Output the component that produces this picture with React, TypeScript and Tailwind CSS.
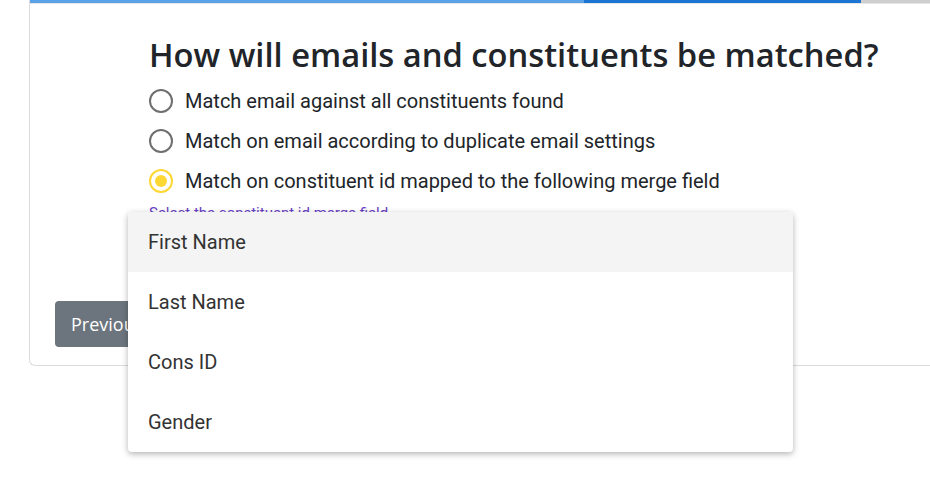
import React from "react";

const options = [
  "Match email against all constituents found",
  "Match on email according to duplicate email settings",
  "Match on constituent id mapped to the following merge field",
];

const fields = ["First Name", "Last Name", "Cons ID", "Gender"];

function Radio({ checked }: { checked: boolean }) {
  return (
    <span
      className={
        checked
          ? "flex h-6 w-6 shrink-0 items-center justify-center rounded-full border-2 border-[#fdd835]"
          : "flex h-6 w-6 shrink-0 items-center justify-center rounded-full border-2 border-[#6f6f6f]"
      }
    >
      {checked && <span className="h-3 w-3 rounded-full bg-[#fdd835]" />}
    </span>
  );
}

export default function App() {
  return (
    <div className="relative h-[492px] w-full overflow-hidden bg-white">
      {/* card */}
      <div className="ml-[29px] h-[366px] rounded-bl-md border-b border-l border-[#dcdcdc]">
        <div className="flex h-[3px]">
          <div className="w-[554px] bg-[#5aa2e8]" />
          <div className="w-[277px] bg-[#1c74d3]" />
          <div className="flex-1 bg-[#cfcfcf]" />
        </div>
        <div className="h-px bg-[#e6e6e6]" />

        <div className="pl-[119px] pt-[31px]">
          <h2 className="text-[32.7px] font-semibold leading-[39px] text-[#212529] [font-family:'Open_Sans',sans-serif]">
            How will emails and constituents be matched?
          </h2>
          <div className="mt-[7px] flex flex-col">
            {options.map((o, i) => (
              <label
                key={o}
                className="flex h-10 items-center gap-3 text-[20px] text-[#212529] [font-family:Roboto,sans-serif]"
              >
                <Radio checked={i === 2} />
                <span>{o}</span>
              </label>
            ))}
          </div>
          <p className="mt-[2px] text-[15px] leading-5 text-[#6a3fc4] [font-family:Roboto,sans-serif]">
            Select the constituent id merge field
          </p>
        </div>

        <div className="mt-[78px] pl-[25px]">
          <button className="h-[46px] rounded-[4px] bg-[#6c757d] px-4 text-[18px] text-white [font-family:'Open_Sans',sans-serif]">
            Previous
          </button>
        </div>
      </div>

      {/* dropdown menu */}
      <ul className="absolute left-[128px] top-[212px] w-[665px] overflow-hidden rounded-[4px] bg-white shadow-[0_2px_6px_rgba(0,0,0,0.3)]">
        {fields.map((f, i) => (
          <li
            key={f}
            className={
              i === 0
                ? "flex h-[60px] items-center bg-[#f4f4f4] pl-5 text-[20px] text-[#333] [font-family:Roboto,sans-serif]"
                : "flex h-[60px] items-center pl-5 text-[20px] text-[#333] [font-family:Roboto,sans-serif]"
            }
          >
            {f}
          </li>
        ))}
      </ul>
    </div>
  );
}
